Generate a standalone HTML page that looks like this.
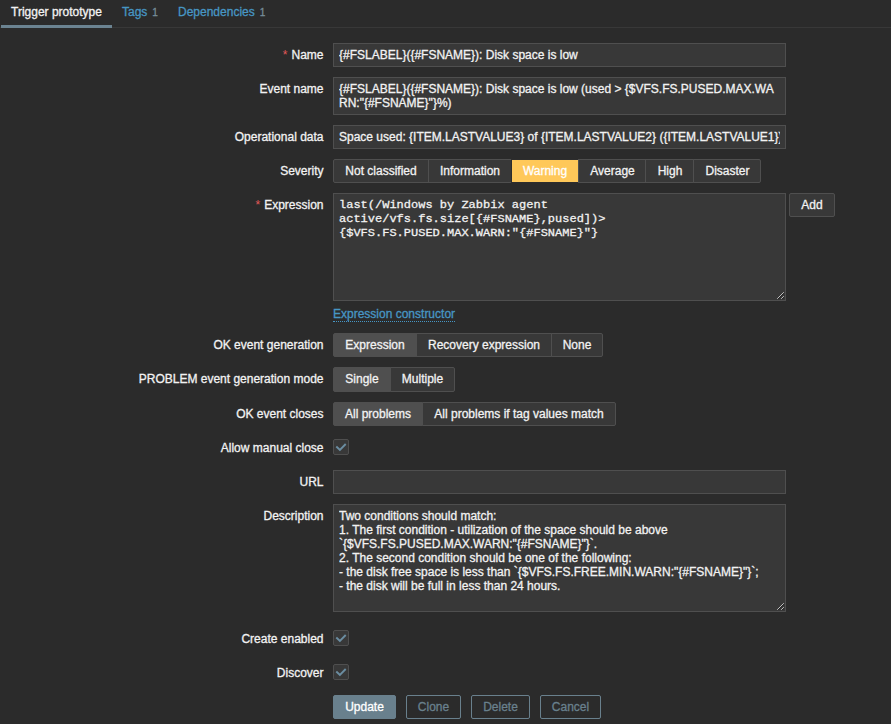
<!DOCTYPE html>
<html><head><meta charset="utf-8">
<style>
*{box-sizing:border-box;margin:0;padding:0}
html,body{width:891px;height:724px;overflow:hidden;background:#2b2b2b}
body{font-family:"Liberation Sans",sans-serif;font-size:12px;line-height:14px;color:#f2f2f2;position:relative;-webkit-text-stroke:0.3px currentColor}
.tabs{position:absolute;left:0;top:0;width:891px;height:28px;border-bottom:1px solid #383838}
.tab{position:absolute;top:0;height:28px;line-height:14px;padding:5px 10px 0 10px;color:#4796c4;white-space:nowrap}
.tab.act{color:#f2f2f2;border-bottom:3px solid #6b8391}
.cnt{font-size:10px;color:#768d99;margin-left:5px}
.lbl{position:absolute;left:0;width:323.5px;text-align:right;white-space:nowrap;height:14px;line-height:14px}
.req:before{content:"*";color:#e45959;margin-right:4px;-webkit-text-stroke:0}
.inp{position:absolute;left:333px;width:453px;background:#383838;border:1px solid #4f4f4f;padding:4px 5px;line-height:14px}
.inp div{white-space:pre;overflow:hidden;width:441px}
.seg{position:absolute;left:333px;height:24px}
.seg span{position:absolute;top:0;display:block;height:24px;line-height:14px;padding:4px 0;text-align:center;border:1px solid #4f4f4f;background:#383838;white-space:nowrap}
.seg span:first-child{border-radius:2px 0 0 2px}
.seg span:last-child{border-radius:0 2px 2px 0}
.seg span.on{background:#4f4f4f}
.seg span.warn{background:#ffc859;border-color:#2d2d2d;color:#fff;background-clip:padding-box}
.seg.t25, .seg.t25 span{height:25px}
.cb{position:absolute;left:333px;width:16px;height:16px;background:#383838;border:1px solid #4f4f4f;border-radius:2px}
.cb svg{position:absolute;left:-1px;top:-1px}
.btn{position:absolute;top:695px;height:24px;line-height:14px;padding:4px 0;text-align:center;border:1px solid #69808d;border-radius:2px;color:#69808d;white-space:nowrap}
.btn.pri{background:#69808d;color:#fff}
.mono div{font-family:"Liberation Mono",monospace;overflow:visible}.mono div p{height:14px;transform:scaleY(.84);transform-origin:0 10.4px}
.grip{position:absolute;right:1px;bottom:1px;width:9px;height:9px}
a.lnk{position:absolute;color:#4796c4;border-bottom:1px dotted #4796c4;line-height:14px;white-space:nowrap}
</style></head><body>
<div class="tabs"></div>
<div class="tab act" style="left:1px">Trigger prototype</div>
<div class="tab" style="left:112px">Tags<span class="cnt">1</span></div>
<div class="tab" style="left:168px">Dependencies<span class="cnt">1</span></div>

<div class="lbl req" style="top:48px">Name</div>
<div class="inp" style="top:43px;height:24px"><div>{#FSLABEL}({#FSNAME}): Disk space is low</div></div>

<div class="lbl" style="top:82px">Event name</div>
<div class="inp" style="top:77px;height:38px"><div>{#FSLABEL}({#FSNAME}): Disk space is low (used &gt; {$VFS.FS.PUSED.MAX.WA
RN:"{#FSNAME}"}%)</div></div>

<div class="lbl" style="top:130px">Operational data</div>
<div class="inp" style="top:125px;height:24px"><div>Space used: {ITEM.LASTVALUE3} of {ITEM.LASTVALUE2} ({ITEM.LASTVALUE1})</div></div>

<div class="lbl" style="top:164px">Severity</div>
<div class="seg" style="top:159px"><span style="left:0;width:96px">Not classified</span><span style="left:95px;width:84px">Information</span><span class="warn" style="left:178px;width:68px">Warning</span><span style="left:245px;width:68px;padding-left:1px">Average</span><span style="left:312px;width:49px;padding-left:1px">High</span><span style="left:360px;width:68px;padding-left:1px">Disaster</span></div>

<div class="lbl req" style="top:198px">Expression</div>
<div class="inp mono" style="top:193px;height:108px"><div><p>last(/Windows by Zabbix agent</p><p>active/vfs.fs.size[{#FSNAME},pused])&gt;</p><p>{$VFS.FS.PUSED.MAX.WARN:"{#FSNAME}"}</p></div>
<svg class="grip" viewBox="0 0 9 9"><path d="M3.2 9 L9 3.2 M7.2 9 L9 7.2" stroke="#222" stroke-width="1" fill="none"/><path d="M2.2 8.8 L8.8 2.2 M6.2 8.8 L8.8 6.2" stroke="#c4c4c4" stroke-width="1" fill="none"/></svg></div>
<div class="btn" style="left:789px;width:46px;top:193px;background:#383838;border-color:#4f4f4f;color:#f2f2f2">Add</div>

<a class="lnk" style="left:333px;top:307px">Expression constructor</a>

<div class="lbl" style="top:338px">OK event generation</div>
<div class="seg" style="top:333px"><span class="on" style="left:0;width:84px">Expression</span><span style="left:83px;width:136px">Recovery expression</span><span style="left:218px;width:52px">None</span></div>

<div class="lbl" style="top:372px">PROBLEM event generation mode</div>
<div class="seg t25" style="top:367px"><span class="on" style="left:0;width:58px">Single</span><span style="left:57px;width:65px">Multiple</span></div>

<div class="lbl" style="top:407px">OK event closes</div>
<div class="seg" style="top:402px"><span class="on" style="left:0;width:90px">All problems</span><span style="left:89px;width:194px">All problems if tag values match</span></div>

<div class="lbl" style="top:441px">Allow manual close</div>
<div class="cb" style="top:439px"><svg width="16" height="16" viewBox="0 0 16 16"><path d="M3.3 7.5 L6.9 11 L12.7 5" fill="none" stroke="#6b8da1" stroke-width="1.9"/></svg></div>

<div class="lbl" style="top:475px">URL</div>
<div class="inp" style="top:470px;height:24px"></div>

<div class="lbl" style="top:509px">Description</div>
<div class="inp" style="top:504px;height:108px"><div>Two conditions should match:
1. The first condition - utilization of the space should be above
`{$VFS.FS.PUSED.MAX.WARN:"{#FSNAME}"}`.
2. The second condition should be one of the following:
- the disk free space is less than `{$VFS.FS.FREE.MIN.WARN:"{#FSNAME}"}`;
- the disk will be full in less than 24 hours.</div>
<svg class="grip" viewBox="0 0 9 9"><path d="M3.2 9 L9 3.2 M7.2 9 L9 7.2" stroke="#222" stroke-width="1" fill="none"/><path d="M2.2 8.8 L8.8 2.2 M6.2 8.8 L8.8 6.2" stroke="#c4c4c4" stroke-width="1" fill="none"/></svg></div>

<div class="lbl" style="top:632px">Create enabled</div>
<div class="cb" style="top:630px"><svg width="16" height="16" viewBox="0 0 16 16"><path d="M3.3 7.5 L6.9 11 L12.7 5" fill="none" stroke="#6b8da1" stroke-width="1.9"/></svg></div>

<div class="lbl" style="top:666px">Discover</div>
<div class="cb" style="top:664px"><svg width="16" height="16" viewBox="0 0 16 16"><path d="M3.3 7.5 L6.9 11 L12.7 5" fill="none" stroke="#6b8da1" stroke-width="1.9"/></svg></div>

<div class="btn pri" style="left:333px;width:63px">Update</div>
<div class="btn" style="left:406px;width:55px">Clone</div>
<div class="btn" style="left:471px;width:59px">Delete</div>
<div class="btn" style="left:540px;width:61px">Cancel</div>
</body></html>
